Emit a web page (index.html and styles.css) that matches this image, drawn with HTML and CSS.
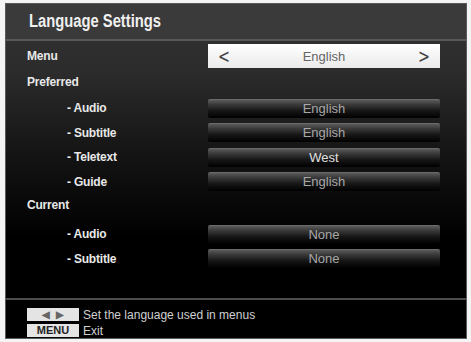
FILE: index.html
```html
<!DOCTYPE html>
<html lang="en">

<head>
    <meta charset="UTF-8">
    <title>Language Settings</title>
    <link rel="stylesheet" href="styles.css">
</head>

<body>
    <div class="screen">
        <div class="title"><span>Language Settings</span></div>

        <div class="content">
            <div class="row menu-row">
                <span class="label">Menu</span>
                <div class="picker">
                    <span class="arrow">&lt;</span>
                    <span class="pick-value">English</span>
                    <span class="arrow">&gt;</span>
                </div>
            </div>

            <div class="heading">Preferred</div>
            <div class="row sub">
                <span class="label">- Audio</span>
                <div class="bar">English</div>
            </div>
            <div class="row sub">
                <span class="label">- Subtitle</span>
                <div class="bar">English</div>
            </div>
            <div class="row sub">
                <span class="label">- Teletext</span>
                <div class="bar bright">West</div>
            </div>
            <div class="row sub">
                <span class="label">- Guide</span>
                <div class="bar">English</div>
            </div>

            <div class="heading current">Current</div>
            <div class="row sub">
                <span class="label">- Audio</span>
                <div class="bar">None</div>
            </div>
            <div class="row sub">
                <span class="label">- Subtitle</span>
                <div class="bar">None</div>
            </div>
        </div>

        <div class="footer">
            <div class="hint">
                <span class="key arrows">&#9664;&nbsp;&nbsp;&#9654;</span>
                <span>Set the language used in menus</span>
            </div>
            <div class="hint">
                <span class="key">MENU</span>
                <span>Exit</span>
            </div>
        </div>
    </div>
</body>

</html>
```

FILE: styles.css
```css
* {
    padding: 0;
    margin: 0;
    box-sizing: border-box;
}

body {
    background: #f4f4f4;
    font-family: "Liberation Sans", Arial, sans-serif;
}

.screen {
    width: 462px;
    height: 336px;
    margin: 3px 0 0 5px;
    border: 1px solid #5a5a5a;
    background: linear-gradient(#333 0%, #2c2c2c 20%, #141414 45%, #000 70%, #000 100%);
    display: flex;
    flex-direction: column;
    color: #e8e8e8;
}

.title {
    height: 37px;
    padding: 7px 0 0 23px;
    font-size: 18px;
    font-weight: bold;
    color: #f0f0f0;
    background: #3a3a3a;
    border-bottom: 2px solid #585858;
}

.title span {
    display: inline-block;
    transform: scaleX(0.82);
    transform-origin: left;
}

.content {
    flex: 1;
    padding: 3px 0 0 21px;
}

.row {
    display: flex;
    align-items: center;
}

.label {
    width: 181px;
    font-size: 12px;
    font-weight: bold;
    letter-spacing: -0.2px;
}

.menu-row {
    height: 24px;
}

.picker {
    width: 232px;
    height: 24px;
    background: linear-gradient(#fff, #eaeaea);
    display: flex;
    align-items: center;
    justify-content: space-between;
    padding: 0 8px;
    color: #666;
}

.picker .arrow {
    font-family: "DejaVu Sans", sans-serif;
    font-size: 19px;
    color: #444;
    transform: scaleX(0.75);
}

.pick-value {
    font-size: 13px;
}

.heading {
    height: 28px;
    padding-top: 7px;
    font-size: 12px;
    font-weight: bold;
    letter-spacing: -0.2px;
}

.heading.current {
    height: 28px;
    padding-top: 4px;
}

.sub {
    height: 24.5px;
}

.sub .label {
    padding-left: 40px;
}

.bar {
    width: 232px;
    height: 19px;
    border-radius: 2px;
    background: linear-gradient(#5a5a5a 0%, #3a3a3a 25%, #161616 60%, #000 100%);
    border-top: 1px solid #6a6a6a;
    text-align: center;
    line-height: 18px;
    font-size: 13px;
    color: #a8a8a8;
}

.bar.bright {
    color: #e0e0e0;
}

.footer {
    height: 40px;
    border-top: 2px solid #4c4c4c;
    padding: 7px 0 0 21px;
    font-size: 12px;
    color: #d0d0d0;
}

.hint {
    display: flex;
    align-items: center;
    gap: 4px;
    height: 15px;
    margin-bottom: 1px;
}

.key {
    width: 52px;
    height: 13px;
    background: #e4e4e4;
    color: #222;
    font-weight: bold;
    font-size: 11px;
    line-height: 13px;
    text-align: center;
}

.key.arrows {
    color: #666;
    font-size: 10px;
}
```
